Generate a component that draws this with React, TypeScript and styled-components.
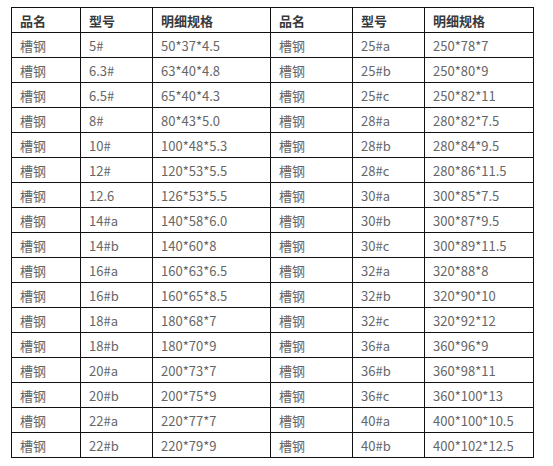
import React from 'react';
import styled, { createGlobalStyle } from 'styled-components';

const GlobalStyle = createGlobalStyle`
  html, body {
    margin: 0;
    padding: 0;
    background: #fff;
  }
`;

const Page = styled.div`
  padding: 7px 0 0 11px;
`;

const Grid = styled.div`
  display: grid;
  grid-template-columns: 68px 71px 117px 81px 71px 108px;
  grid-auto-rows: 24px;
  gap: 1px;
  padding: 1px;
  width: max-content;
  background: #111;
  font-family: "Noto Sans CJK SC", "Noto Sans", sans-serif;
  font-size: 13px;
`;

const Cell = styled.div<{ $head?: boolean }>`
  background: #fff;
  display: flex;
  align-items: center;
  padding-left: 8px;
  color: ${(p) => (p.$head ? '#3a3a3a' : '#666')};
  font-weight: ${(p) => (p.$head ? 700 : 400)};
  white-space: nowrap;
`;

const heads = ['品名', '型号', '明细规格', '品名', '型号', '明细规格'];

const rows: [string, string, string, string][] = [
  ['5#', '50*37*4.5', '25#a', '250*78*7'],
  ['6.3#', '63*40*4.8', '25#b', '250*80*9'],
  ['6.5#', '65*40*4.3', '25#c', '250*82*11'],
  ['8#', '80*43*5.0', '28#a', '280*82*7.5'],
  ['10#', '100*48*5.3', '28#b', '280*84*9.5'],
  ['12#', '120*53*5.5', '28#c', '280*86*11.5'],
  ['12.6', '126*53*5.5', '30#a', '300*85*7.5'],
  ['14#a', '140*58*6.0', '30#b', '300*87*9.5'],
  ['14#b', '140*60*8', '30#c', '300*89*11.5'],
  ['16#a', '160*63*6.5', '32#a', '320*88*8'],
  ['16#b', '160*65*8.5', '32#b', '320*90*10'],
  ['18#a', '180*68*7', '32#c', '320*92*12'],
  ['18#b', '180*70*9', '36#a', '360*96*9'],
  ['20#a', '200*73*7', '36#b', '360*98*11'],
  ['20#b', '200*75*9', '36#c', '360*100*13'],
  ['22#a', '220*77*7', '40#a', '400*100*10.5'],
  ['22#b', '220*79*9', '40#b', '400*102*12.5'],
];

const App: React.FC = () => {
  return (
    <>
      <GlobalStyle />
      <Page>
        <Grid>
          {heads.map((h, i) => (
            <Cell key={'h' + i} $head>
              {h}
            </Cell>
          ))}
          {rows.map((r, i) => (
            <React.Fragment key={i}>
              <Cell>槽钢</Cell>
              <Cell>{r[0]}</Cell>
              <Cell>{r[1]}</Cell>
              <Cell>槽钢</Cell>
              <Cell>{r[2]}</Cell>
              <Cell>{r[3]}</Cell>
            </React.Fragment>
          ))}
        </Grid>
      </Page>
    </>
  );
};

export default App;
